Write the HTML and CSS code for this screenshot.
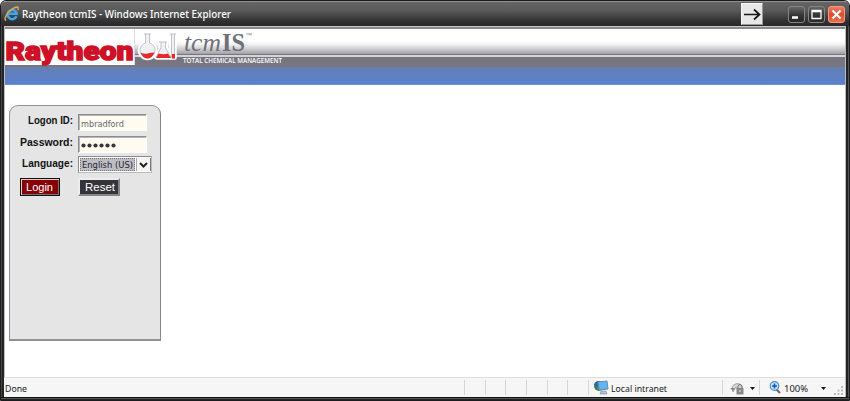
FILE: index.html
```html
<!DOCTYPE html>
<html lang="en">
<head>
<meta charset="utf-8">
<title>Raytheon tcmIS</title>
<link rel="stylesheet" href="styles.css">
</head>
<body>
<div class="window">
  <header class="titlebar">
    <svg class="ie" width="16" height="16" viewBox="0 0 16 16"><path d="M12.500 10.300A4.600 4.600 0 1 1 12.800 7.800H5" fill="none" stroke="#3fa5ec" stroke-width="2.500"/><path d="M2.200 14.500C-1 14 3 6.500 8 3.200S15.300.300 13.700 4" fill="none" stroke="#e2ad45" stroke-width="1.400"/></svg>
    <svg class="caption" width="214" height="20"><text x="0" y="14" textLength="209" lengthAdjust="spacingAndGlyphs">Raytheon tcmIS - Windows Internet Explorer</text></svg>
    <div class="arrow"><svg width="21" height="21"><path d="M2 10.500H17M12 5.500L17.500 10.500L12 15.500" fill="none" stroke="#161616" stroke-width="1.700"/></svg></div>
    <div class="controls">
      <span class="ctl"><svg width="15" height="15"><path d="M3 10.500H9" stroke="#fff" stroke-width="2.500"/></svg></span>
      <span class="ctl"><svg width="15" height="15"><path d="M3 3.500H12V11.500H3ZM3 4.500H12" fill="none" stroke="#fff" stroke-width="1.300"/></svg></span>
      <span class="ctl close"><svg width="15" height="15"><path d="M3.500 3.500L11.500 11.500M11.500 3.500L3.500 11.500" stroke="#fff" stroke-width="2.200"/></svg></span>
    </div>
  </header>
  <main class="page">
    <div class="banner">
      <svg class="brand" width="129" height="36"><text x="0.500" y="31" textLength="128" lengthAdjust="spacingAndGlyphs">Raytheon</text></svg>
      <svg class="product" width="160" height="38">
        <path d="M.5 0V36" stroke="#ddd"/>
        <g stroke="#fff" stroke-width="3.500" fill="#fff" stroke-linejoin="round"><path d="M11 5H16V14A8 8 0 1 1 11 14Z"/><path d="M26 13H32V18L37 27Q38 29 36 29H23Q21 29 22 27L26 20Z"/><path d="M37 5H41V29H37Z"/></g>
        <g fill="#f1f1f3" stroke="#b9bac0" stroke-width=".9"><path d="M10 5H17M11.500 5V14A7.500 7.500 0 1 0 15.500 14V5"/><path d="M25 13H33M27 13V19L22 28H37L31.500 19V13"/><path d="M36 5H42M37.500 5V29H40.500V5"/></g>
        <path d="M6.500 23.500Q10 25.500 13.500 24.500T20.500 23.500Q18 29.500 13.500 29.500T6.500 23.500ZM24.500 24.500Q30 26 34 24.500L37 29H22ZM38 25H41V29.500H38Z" fill="#e52a2c"/>
        <text class="tcm" x="50" y="22" textLength="37" lengthAdjust="spacingAndGlyphs">tcm</text>
        <text class="is" x="88" y="22" textLength="23" lengthAdjust="spacingAndGlyphs">IS</text>
        <text class="tm" x="111" y="8" textLength="7" lengthAdjust="spacingAndGlyphs">™</text>
        <text class="tag" x="49" y="34" textLength="99" lengthAdjust="spacingAndGlyphs">TOTAL CHEMICAL MANAGEMENT</text>
      </svg>
    </div>
    <div class="bluebar"></div>
    <form class="panel">
      <label class="label" for="logon"><svg width="58" height="18"><text x="9" y="13" textLength="45" lengthAdjust="spacingAndGlyphs">Logon ID:</text></svg></label>
      <div class="field" id="logon"><svg width="60" height="14"><text x="1" y="11" textLength="43" lengthAdjust="spacingAndGlyphs">mbradford</text></svg></div>
      <label class="label"><svg width="58" height="18"><text x="1" y="13" textLength="53" lengthAdjust="spacingAndGlyphs">Password:</text></svg></label>
      <div class="field"><svg width="60" height="14" fill="#37363b"><circle cx="3.500" cy="7.500" r="2.100"/><circle cx="9.500" cy="7.500" r="2.100"/><circle cx="15.500" cy="7.500" r="2.100"/><circle cx="21.500" cy="7.500" r="2.100"/><circle cx="27.500" cy="7.500" r="2.100"/><circle cx="33.500" cy="7.500" r="2.100"/></svg></div>
      <label class="label"><svg width="58" height="18"><text x="3" y="13" textLength="51" lengthAdjust="spacingAndGlyphs">Language:</text></svg></label>
      <div class="select"><span class="chosen"><svg width="54" height="13"><text x="1" y="10" textLength="51" lengthAdjust="spacingAndGlyphs">English (US)</text></svg></span><span class="drop"><svg width="13" height="14"><path d="M3 5L6.500 8.500L10 5" fill="none" stroke="#222" stroke-width="2"/></svg></span></div>
      <button type="button" class="btn login"><svg width="36" height="14"><text x="4" y="11" textLength="27" lengthAdjust="spacingAndGlyphs">Login</text></svg></button>
      <button type="button" class="btn reset"><svg width="38" height="14"><text x="5" y="11" textLength="30" lengthAdjust="spacingAndGlyphs">Reset</text></svg></button>
    </form>
  </main>
  <footer class="status">
    <svg class="done" width="459" height="18"><text x="0" y="13" textLength="22" lengthAdjust="spacingAndGlyphs">Done</text></svg>
    <span class="cell"></span><span class="cell"></span><span class="cell"></span><span class="cell"></span><span class="cell"></span><span class="cell"></span>
    <span class="cell zone"><svg width="130" height="18"><circle cx="9" cy="7" r="5" fill="#368654"/><path d="M4 6Q5 2 9 2L8 8Z" fill="#3262b4"/><path d="M8 3L17 2L18 10L9 11Z" fill="#5eb7f1" stroke="#7189a5"/><path d="M11 12H16L17 15H10Z" fill="#b9c1cf" stroke="#7b8798" stroke-width=".6"/><text x="21" y="13" textLength="56" lengthAdjust="spacingAndGlyphs">Local intranet</text></svg></span>
    <span class="cell guard"><svg width="36" height="18"><path d="M9 9A5.500 5.500 0 0 1 19 7V11H15L13 8L10 13Z" fill="#d4d4d4" stroke="#999" stroke-width=".8"/><path d="M7 9L10 12L12 9Z" fill="#888"/><path d="M15 9V7.500A2 2 0 0 1 19 7.500V9" fill="none" stroke="#777"/><path d="M13.500 9H20.500V15.500H13.500Z" fill="#888"/><path d="M17 11V13" stroke="#eee"/><path d="M27 8H32L29.500 11Z" fill="#111"/></svg></span>
    <span class="cell zoom"><svg width="84" height="18"><path d="M16 10L20 14" stroke="#6e5d59" stroke-width="2"/><circle cx="14.500" cy="7" r="4.300" fill="#c7e4fc" stroke="#4c88c4" stroke-width="1.200"/><path d="M12 7H17M14.500 4.500V9.500" stroke="#1755b4" stroke-width="1.600"/><text x="24" y="13" textLength="24" lengthAdjust="spacingAndGlyphs">100%</text><path d="M61 8H66L63.500 11Z" fill="#111"/></svg></span>
    <svg class="grip" width="10" height="10" fill="#bbb"><path d="M7 0h2v2h-2zM7 3.500h2v2h-2zM3.500 3.500h2v2h-2zM7 7h2v2h-2zM3.500 7h2v2h-2zM0 7h2v2h-2z"/></svg>
  </footer>
</div>
</body>
</html>
```
FILE: styles.css
```css
* { box-sizing: border-box; }
html { background: #fff; }
body { margin: 0; font-family: "Open Sans", sans-serif; }
svg { display: block; flex-shrink: 0; overflow: visible; }
.window { width: 850px; height: 401px; display: flex; flex-direction: column; padding: 0 4px 3px 4px; border: 1px solid #1c1c1e; border-radius: 6px 6px 0 0; background: linear-gradient(transparent 396px, #111 396px 397px, #555 397px 398px, #222 398px), linear-gradient(90deg, #444 0 1px, #242426 1px 3px, #bcbcc0 3px 4px, #fff 4px 844px, #bbb 844px 845px, #222 845px 847px, #555 847px); }
.titlebar { height: 25px; margin: 0 -4px; padding: 1px 4px 0 3px; display: flex; align-items: center; flex-shrink: 0; border-top: 1px solid #929294; border-radius: 5px 5px 0 0; background: linear-gradient(#656565, #5a5a5a 35%, #434344 60%, #313132 80%, #29292a); }
.ie { margin-top: -1px; }
.caption { margin: -1px 0 0 2px; }
.caption text { fill: #fff; font: 500 10.800px "Noto Sans", sans-serif; }
.arrow { width: 22px; height: 22px; margin: -2px 0 0 auto; background: #e7e7e7; border: 1px solid #f8f8f8; border-right-color: #999; border-bottom-color: #999; }
.controls { display: flex; gap: 3px; margin: -1px 0 0 25px; }
.ctl { width: 17px; height: 17px; border: 1px solid #858585; border-radius: 3px; background: linear-gradient(#666, #353535 55%, #292929); }
.close { background: linear-gradient(#ed7d66, #df4b30 50%, #ef6d4a); border-color: #f09a85; }
.page { flex: 1; background: #fff; border-top: 1px solid #c9c9cd; box-shadow: inset 0 2px #8b8b8f; padding-top: 2px; }
.banner { height: 38px; display: flex; background: linear-gradient(#fff 0 12px, #f4f4f6 15px, #d5d5d8 19px, #a6a6aa 24.500px, #77777d 25px 26px, #d5d5d8 26px 28px, #777580 28px); }
.brand { background: #fff; }
.brand text { font: 900 26.500px Roboto, sans-serif; fill: #ce1126; stroke: #ce1126; stroke-width: 1.500px; }
.tcm { font: italic 25px "Liberation Serif", serif; fill: #707078; }
.is { font: bold 25px "Liberation Serif", serif; fill: #707078; }
.tm { font: 6px "Liberation Sans", sans-serif; fill: #85858a; }
.tag { font: 600 6.800px "Open Sans", sans-serif; fill: #fff; }
.bluebar { height: 18px; background: linear-gradient(#667fb2, #5d80c5 60%, #5b80cc 94%, #84a3df); }
.panel { width: 152px; height: 236px; margin: 20px 0 0 4px; padding: 8px 0 0 9px; border: 1px solid #909096; border-bottom-width: 2px; border-right-color: #85858a; border-radius: 9px 9px 0 0; background: #e5e5e5; display: grid; grid-template-columns: 56px 75px; grid-template-rows: 17px 16px 17px 18px; column-gap: 3px; row-gap: 5px; align-content: start; align-items: start; }
.label { height: 16px; margin-top: -3px; }
.label text { font: bold 11px "Liberation Sans", sans-serif; fill: #111; }
.field { width: 69px; height: 17px; padding: 1px; border: 1px solid #8c8c8c; border-right-color: #fff; border-bottom-color: #fff; box-shadow: inset 1px 1px #b7b7b7; background: #fffbf0; }
.field text { font: 9px "DejaVu Sans", sans-serif; fill: #686872; }
.select { width: 74px; height: 17px; margin-top: -1px; display: flex; padding: 1px; gap: 1px; border: 1px solid #8b8b8f; border-right-color: #bbb; border-bottom-color: #bbb; background: #fff; }
.chosen { width: 55px; height: 13px; background: #bdbdc5; border: 1px dotted #777; }
.chosen text { font: 9px "DejaVu Sans", sans-serif; fill: #25252e; }
.chosen svg { margin-top: -1px; }
.drop { width: 15px; height: 13px; border-right: 1px solid #777; border-left: 1px solid #aaa; background: #f4f4f4; }
.btn { height: 18px; padding: 0; margin: -1px 0 0; display: flex; align-items: center; justify-content: center; }
.btn text { font: 11px "Liberation Sans", sans-serif; fill: #fff; }
.login { width: 40px; margin-left: 1px; background: #870006; border: 1px solid #111; box-shadow: inset 1px 1px #e8caca, inset -1px -1px #777; }
.reset { width: 42px; background: #353539; border: 2px solid #ededed; border-right-color: #85858a; border-bottom-color: #85858a; }
.status { height: 20px; margin-left: -1px; display: flex; flex-shrink: 0; background: #f6f6f6; border-top: 1px solid #dedede; position: relative; }
.status text { font: 9.800px "Noto Sans", sans-serif; fill: #202024; }
.status > svg.done { margin: 1px 0 0 1px; }
.cell { width: 20.700px; height: 15px; margin-top: 2px; border-left: 1px solid #d5d5d5; flex-shrink: 0; }
.cell svg { margin-top: -1px; }
.zone { width: 134px; padding-left: 1px; }
.guard { width: 37px; }
.zoom { width: 84px; }
.grip { position: absolute; right: 1px; bottom: 1px; }
```
